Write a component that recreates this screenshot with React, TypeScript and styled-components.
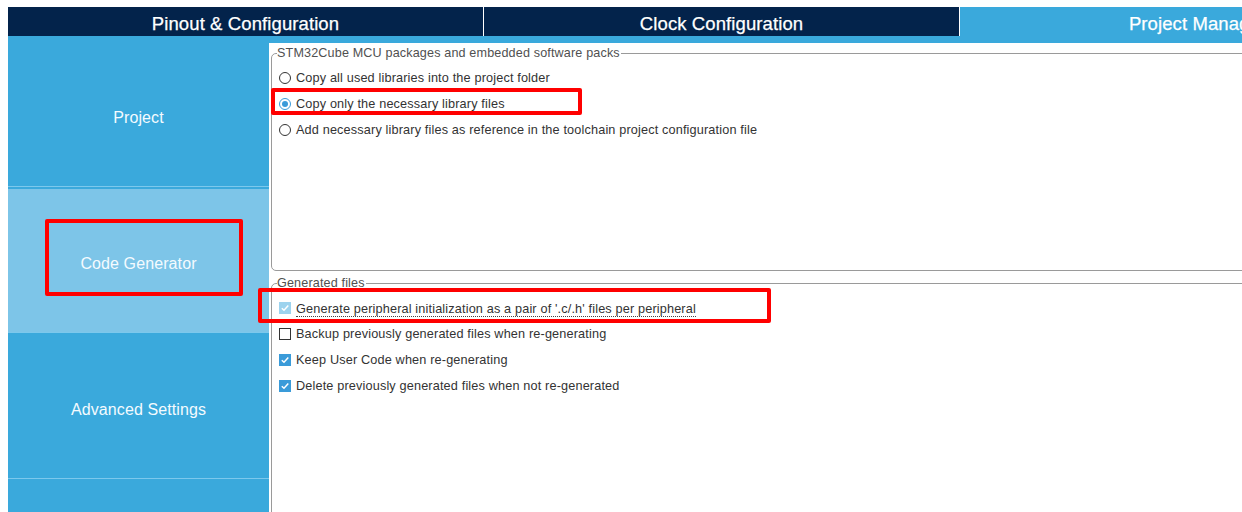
import React from "react";
import styled, { createGlobalStyle } from "styled-components";

const Global = createGlobalStyle`
  html, body { margin: 0; padding: 0; background: #ffffff; }
  body { font-family: "Liberation Sans", Arial, sans-serif; }
`;

const Page = styled.div`
  width: 1242px;
  height: 512px;
  overflow: hidden;
  box-sizing: border-box;
  padding: 7px 0 0 8px;
  background: #fff;
`;

const TabBar = styled.div`
  display: flex;
  height: 29px;
  width: 1500px;
  gap: 1px;
  background: #fff;
`;

const Tab = styled.div<{ $active?: boolean }>`
  flex: 0 0 475px;
  display: flex;
  align-items: center;
  justify-content: center;
  background: ${(p) => (p.$active ? "#3aa9dc" : "#03234b")};
  color: #fff;
  font-size: 18.5px;
  -webkit-text-stroke: 0.25px #fff;
  letter-spacing: 0.1px;
  padding-top: 4px;
  box-sizing: border-box;
`;

const Strip = styled.div`
  height: 7px;
  background: #3aa9dc;
`;

const Body = styled.div`
  display: flex;
  align-items: flex-start;
`;

const Sidebar = styled.div`
  flex: 0 0 261px;
  background: #3aa9dc;
  display: flex;
  flex-direction: column;
  height: 470px;
  position: relative;
  z-index: 1;
`;

const NavItem = styled.div<{ $selected?: boolean }>`
  position: relative;
  height: 144px;
  flex: 0 0 144px;
  border-bottom: 1px solid #7cc8ec;
  margin-bottom: 2px;
  background: ${(p) => (p.$selected ? "#7dc5e8" : "#3aa9dc")};
  color: #f4fbff;
  font-size: 16px;
  letter-spacing: 0.1px;
  display: flex;
  align-items: center;
  justify-content: center;
  padding-top: 7px;
  box-sizing: border-box;
`;

const Mark = styled.div<{ $l: number; $t: number; $w: number; $h: number }>`
  position: absolute;
  left: ${(p) => p.$l}px;
  top: ${(p) => p.$t}px;
  width: ${(p) => p.$w}px;
  height: ${(p) => p.$h}px;
  box-sizing: border-box;
  border: 4px solid #ff0000;
  border-radius: 2px;
  pointer-events: none;
  z-index: 5;
`;

const Panel = styled.div`
  flex: 1 0 auto;
  padding-left: 2px;
  position: relative;
  z-index: 2;
`;

const Group = styled.fieldset<{ $h?: number; $mt: number }>`
  margin: ${(p) => p.$mt}px 0 0 0;
  width: 1100px;
  ${(p) => (p.$h ? `height: ${p.$h}px;` : "height: 260px;")}
  box-sizing: border-box;
  border: 1px solid #9a9a9a;
  border-radius: 5px;
  padding: 5px 0 0 7px;
  min-width: 0;
`;

const Legend = styled.legend`
  font-size: 12.6px;
  line-height: 14px;
  color: #505050;
  padding: 0 1px 0 0;
  margin-left: -2px;
  letter-spacing: 0.15px;
`;

const Row = styled.div`
  position: relative;
  height: 26px;
  display: flex;
  align-items: center;
  gap: 5px;
  font-size: 12.7px;
  color: #333;
  letter-spacing: 0.15px;
`;

const Radio = styled.span<{ $on?: boolean }>`
  width: 12px;
  height: 12px;
  box-sizing: border-box;
  border-radius: 50%;
  border: 1px solid ${(p) => (p.$on ? "#3a9bd9" : "#333")};
  background: #fff;
  display: flex;
  align-items: center;
  justify-content: center;
  &::after {
    content: "";
    width: 6px;
    height: 6px;
    border-radius: 50%;
    background: ${(p) => (p.$on ? "#3a9bd9" : "transparent")};
  }
`;

const Box = styled.span<{ $state: "off" | "on" | "dis" }>`
  width: 12px;
  height: 12px;
  box-sizing: border-box;
  border: 1px solid
    ${(p) => (p.$state === "off" ? "#333" : p.$state === "on" ? "#3a9bd9" : "#9dd3ee")};
  background: ${(p) => (p.$state === "off" ? "#fff" : p.$state === "on" ? "#3a9bd9" : "#9dd3ee")};
  display: flex;
  align-items: center;
  justify-content: center;
`;

const Label = styled.span<{ $dotted?: boolean }>`
  line-height: 14px;
  ${(p) => (p.$dotted ? "border-bottom: 1px dotted #444; margin-top: 2px;" : "")}
`;

const Check = () => (
  <svg width="10" height="10" viewBox="0 0 10 10">
    <path d="M1.8 5.2 L4 7.3 L8.3 2.6" fill="none" stroke="#fff" strokeWidth="1.5" />
  </svg>
);

export default function App() {
  return (
    <Page>
      <Global />
      <TabBar>
        <Tab>Pinout &amp; Configuration</Tab>
        <Tab>Clock Configuration</Tab>
        <Tab $active>Project Manager</Tab>
      </TabBar>
      <Strip />
      <Body>
        <Sidebar>
          <NavItem>Project</NavItem>
          <NavItem $selected>
            Code Generator
            <Mark $l={37} $t={30} $w={198} $h={77} />
          </NavItem>
          <NavItem>Advanced Settings</NavItem>
          <NavItem />
        </Sidebar>
        <Panel>
          <Group $mt={3} $h={225}>
            <Legend>STM32Cube MCU packages and embedded software packs</Legend>
            <Row>
              <Radio />
              <Label>Copy all used libraries into the project folder</Label>
            </Row>
            <Row>
              <Radio $on />
              <Label>Copy only the necessary library files</Label>
              <Mark $l={-8} $t={-3} $w={311} $h={27} />
            </Row>
            <Row>
              <Radio />
              <Label>Add necessary library files as reference in the toolchain project configuration file</Label>
            </Row>
          </Group>
          <Group $mt={5}>
            <Legend>Generated files</Legend>
            <Row>
              <Box $state="dis">
                <Check />
              </Box>
              <Label $dotted>Generate peripheral initialization as a pair of '.c/.h' files per peripheral</Label>
              <Mark $l={-21} $t={-7} $w={513} $h={35} />
            </Row>
            <Row>
              <Box $state="off" />
              <Label>Backup previously generated files when re-generating</Label>
            </Row>
            <Row>
              <Box $state="on">
                <Check />
              </Box>
              <Label>Keep User Code when re-generating</Label>
            </Row>
            <Row>
              <Box $state="on">
                <Check />
              </Box>
              <Label>Delete previously generated files when not re-generated</Label>
            </Row>
          </Group>
        </Panel>
      </Body>
    </Page>
  );
}
